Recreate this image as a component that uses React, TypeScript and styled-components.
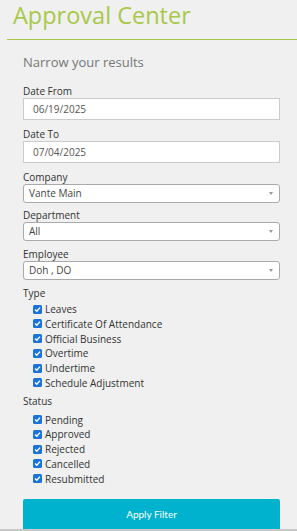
import React from "react";
import styled, { createGlobalStyle } from "styled-components";

const Global = createGlobalStyle`
  html, body { margin: 0; padding: 0; background: #eff0ef; }
  body { font-family: "Open Sans", "Liberation Sans", sans-serif; color: #333; }
  * { box-sizing: border-box; }
`;

const Page = styled.div`
  width: 297px;
  height: 531px;
  overflow: hidden;
  background: #eff0ef;
  border-bottom: 2px solid #c8c8c8;
  display: flex;
  flex-direction: column;
`;

const Title = styled.h1`
  margin: 0;
  padding: 0 0 0 13px;
  font-size: 23.5px;
  line-height: 30px;
  font-weight: 400;
  color: #a9c84a;
`;

const Divider = styled.div`
  margin: 9px 0 0 7px;
  height: 1px;
  background: #a9c84a;
`;

const Form = styled.div`
  padding: 13px 17px 0 23px;
  display: flex;
  flex-direction: column;
`;

const Heading = styled.div`
  font-size: 13px;
  color: #777;
  line-height: 18px;
  margin-bottom: 14px;
`;

const Label = styled.div`
  font-size: 10px;
  line-height: 13px;
  color: #333;
`;

const Field = styled.div<{ $gap?: number }>`
  display: flex;
  flex-direction: column;
  margin-bottom: ${(p) => p.$gap ?? 7}px;
`;

const TextInput = styled.div`
  height: 22px;
  border: 1px solid #ccc;
  background: #fff;
  padding-left: 9px;
  font-size: 10px;
  color: #555;
  display: flex;
  align-items: center;
`;

const Select = styled.div`
  height: 19px;
  border: 1px solid #aaa;
  border-radius: 3px;
  background: #fff;
  padding: 0 6px 0 5px;
  font-size: 10px;
  color: #444;
  display: flex;
  align-items: center;
  justify-content: space-between;
`;

const Caret = styled.span`
  width: 0;
  height: 0;
  border-left: 2.5px solid transparent;
  border-right: 2.5px solid transparent;
  border-top: 3px solid #999;
`;

const CheckList = styled.div<{ $top: number }>`
  display: flex;
  flex-direction: column;
  padding: ${(p) => p.$top}px 0 0 10px;
`;

const CheckRow = styled.div`
  display: flex;
  align-items: center;
  gap: 3px;
  height: 14.75px;
  font-size: 10px;
  color: #333;
`;

const Box = styled.span`
  width: 9px;
  height: 9px;
  border-radius: 1.5px;
  background: #1a73d9;
  display: inline-flex;
  align-items: center;
  justify-content: center;
`;

const Button = styled.button`
  margin-top: 6px;
  height: 30px;
  width: 257px;
  border: none;
  border-radius: 2px 2px 0 0;
  background: #00b2ce;
  color: #fff;
  font-family: "Lato", "Open Sans", sans-serif;
  font-size: 10px;
  font-weight: 400;
  flex-shrink: 0;
`;

const Check = ({ label }: { label: string }) => (
  <CheckRow>
    <Box>
      <svg width="7" height="7" viewBox="0 0 7 7">
        <path d="M1 3.6 L2.8 5.3 L6 1.6" stroke="#fff" strokeWidth="1.4" fill="none" />
      </svg>
    </Box>
    {label}
  </CheckRow>
);

export default function App() {
  const types = ["Leaves", "Certificate Of Attendance", "Official Business", "Overtime", "Undertime", "Schedule Adjustment"];
  const statuses = ["Pending", "Approved", "Rejected", "Cancelled", "Resubmitted"];
  return (
    <>
      <Global />
      <Page>
        <Title>Approval Center</Title>
        <Divider />
        <Form>
          <Heading>Narrow your results</Heading>
          <Field $gap={8}>
            <Label>Date From</Label>
            <TextInput>06/19/2025</TextInput>
          </Field>
          <Field $gap={8}>
            <Label>Date To</Label>
            <TextInput>07/04/2025</TextInput>
          </Field>
          <Field $gap={6}>
            <Label>Company</Label>
            <Select>Vante Main<Caret /></Select>
          </Field>
          <Field>
            <Label>Department</Label>
            <Select>All<Caret /></Select>
          </Field>
          <Field>
            <Label>Employee</Label>
            <Select>Doh , DO<Caret /></Select>
          </Field>
          <Field $gap={5}>
            <Label>Type</Label>
            <CheckList $top={2}>
              {types.map((t) => <Check key={t} label={t} />)}
            </CheckList>
          </Field>
          <Field>
            <Label>Status</Label>
            <CheckList $top={4}>
              {statuses.map((t) => <Check key={t} label={t} />)}
            </CheckList>
          </Field>
          <Button>Apply Filter</Button>
        </Form>
      </Page>
    </>
  );
}
